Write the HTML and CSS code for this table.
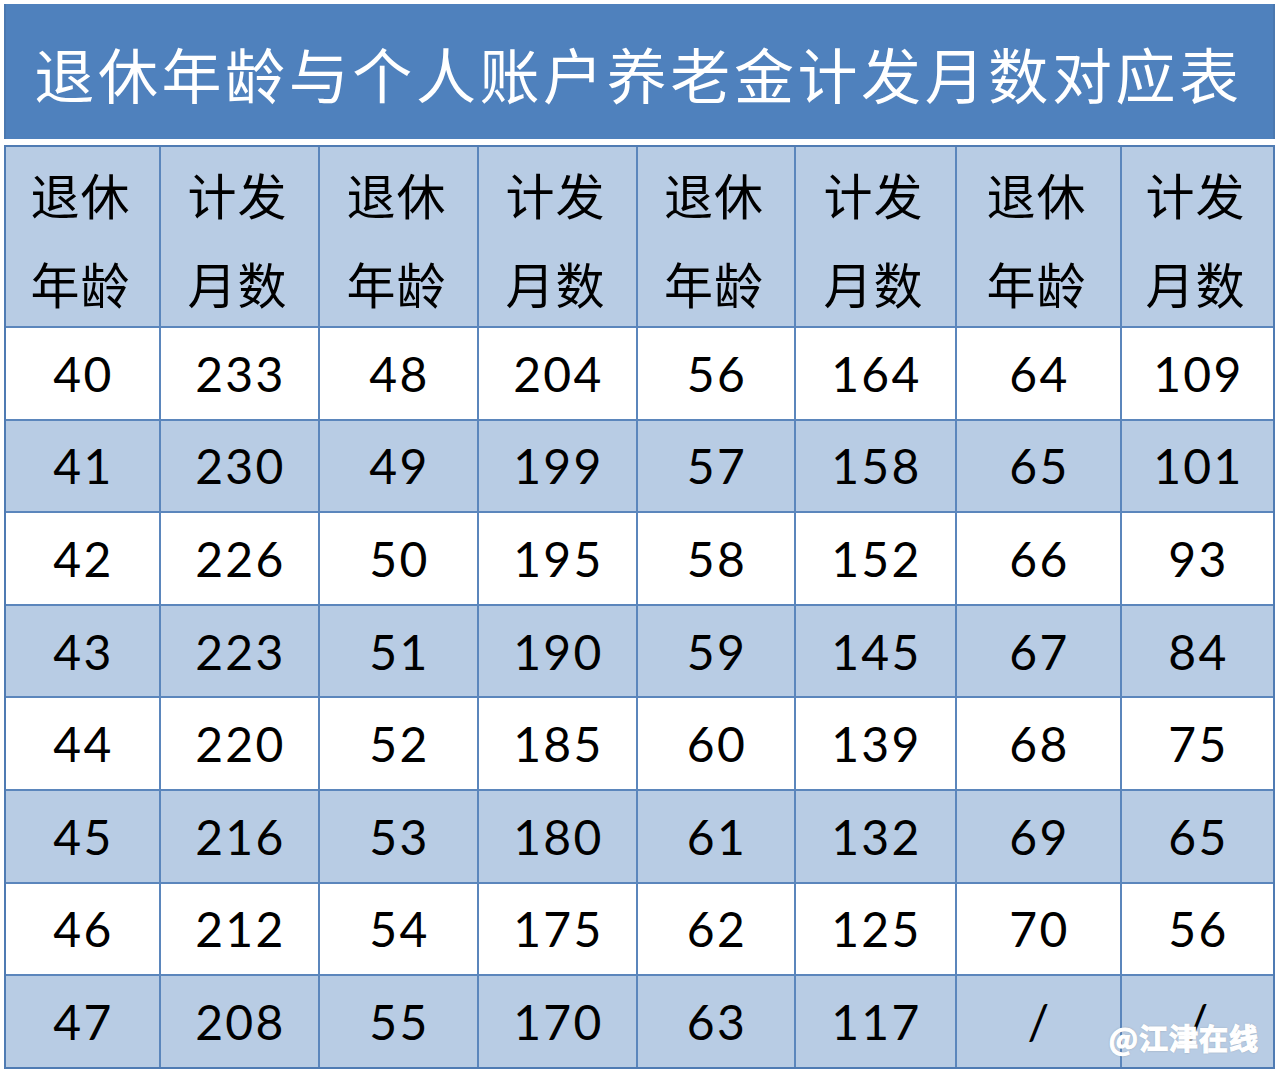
FILE: index.html
```html
<!DOCTYPE html>
<html lang="zh-CN">
<head>
<meta charset="utf-8">
<link rel="stylesheet" href="styles.css">
</head>
<body>
<div class="sheet">
  <div class="title">退休年龄与个人账户养老金计发月数对应表</div>
  <div class="grid">
    <div class="cell head">退休<br>年龄</div>
    <div class="cell head">计发<br>月数</div>
    <div class="cell head">退休<br>年龄</div>
    <div class="cell head">计发<br>月数</div>
    <div class="cell head">退休<br>年龄</div>
    <div class="cell head">计发<br>月数</div>
    <div class="cell head">退休<br>年龄</div>
    <div class="cell head">计发<br>月数</div>

    <div class="cell">40</div><div class="cell">233</div><div class="cell">48</div><div class="cell">204</div><div class="cell">56</div><div class="cell">164</div><div class="cell">64</div><div class="cell">109</div>
    <div class="cell alt">41</div><div class="cell alt">230</div><div class="cell alt">49</div><div class="cell alt">199</div><div class="cell alt">57</div><div class="cell alt">158</div><div class="cell alt">65</div><div class="cell alt">101</div>
    <div class="cell">42</div><div class="cell">226</div><div class="cell">50</div><div class="cell">195</div><div class="cell">58</div><div class="cell">152</div><div class="cell">66</div><div class="cell">93</div>
    <div class="cell alt">43</div><div class="cell alt">223</div><div class="cell alt">51</div><div class="cell alt">190</div><div class="cell alt">59</div><div class="cell alt">145</div><div class="cell alt">67</div><div class="cell alt">84</div>
    <div class="cell">44</div><div class="cell">220</div><div class="cell">52</div><div class="cell">185</div><div class="cell">60</div><div class="cell">139</div><div class="cell">68</div><div class="cell">75</div>
    <div class="cell alt">45</div><div class="cell alt">216</div><div class="cell alt">53</div><div class="cell alt">180</div><div class="cell alt">61</div><div class="cell alt">132</div><div class="cell alt">69</div><div class="cell alt">65</div>
    <div class="cell">46</div><div class="cell">212</div><div class="cell">54</div><div class="cell">175</div><div class="cell">62</div><div class="cell">125</div><div class="cell">70</div><div class="cell">56</div>
    <div class="cell alt">47</div><div class="cell alt">208</div><div class="cell alt">55</div><div class="cell alt">170</div><div class="cell alt">63</div><div class="cell alt">117</div><div class="cell alt">/</div><div class="cell alt">/</div>
  </div>
  <div class="watermark">@江津在线</div>
</div>
</body>
</html>
```

FILE: styles.css
```css
html, body {
  margin: 0;
  padding: 0;
  background: #ffffff;
}

.sheet {
  position: relative;
  width: 1271px;
  margin: 4px 0 0 4px;
  font-family: "Noto Sans CJK SC", "Noto Sans", sans-serif;
}

.title {
  height: 135px;
  background: #4f81bd;
  color: #ffffff;
  font-size: 60px;
  letter-spacing: 3.6px;
  line-height: 138px;
  text-align: center;
  padding-right: 2px;
  border-left: 2px solid #4a78b0;
  border-right: 2px solid #4a78b0;
  box-sizing: border-box;
}

.grid {
  display: grid;
  grid-template-columns: 153px 157px 157px 157px 156px 159px 163px 151px;
  grid-template-rows: 179px repeat(8, 90.6px);
  gap: 2px;
  background: #5b86bc;
  border: 2px solid #4f7bb3;
  margin-top: 6px;
}

.cell {
  background: #ffffff;
  color: #000000;
  display: flex;
  align-items: center;
  justify-content: center;
  font-family: "Lato", "Noto Sans CJK SC", sans-serif;
  font-size: 48px;
  letter-spacing: 2.4px;
  padding-left: 2px;
}

.cell.alt {
  background: #b8cce4;
}

.cell.head {
  background: #b8cce4;
  font-family: "Noto Sans CJK SC", sans-serif;
  font-size: 49px;
  letter-spacing: 1px;
  line-height: 89px;
  text-align: center;
  padding-left: 0;
  padding-right: 4px;
  padding-top: 2px;
}

.watermark {
  position: absolute;
  right: 16px;
  bottom: 11px;
  color: #ffffff;
  font-family: "Noto Sans CJK SC", sans-serif;
  font-weight: 700;
  font-size: 29px;
  letter-spacing: 1px;
  -webkit-text-stroke: 1.2px #ffffff;
  text-shadow: 0 0 2px rgba(80, 80, 80, 0.6);
}
```
